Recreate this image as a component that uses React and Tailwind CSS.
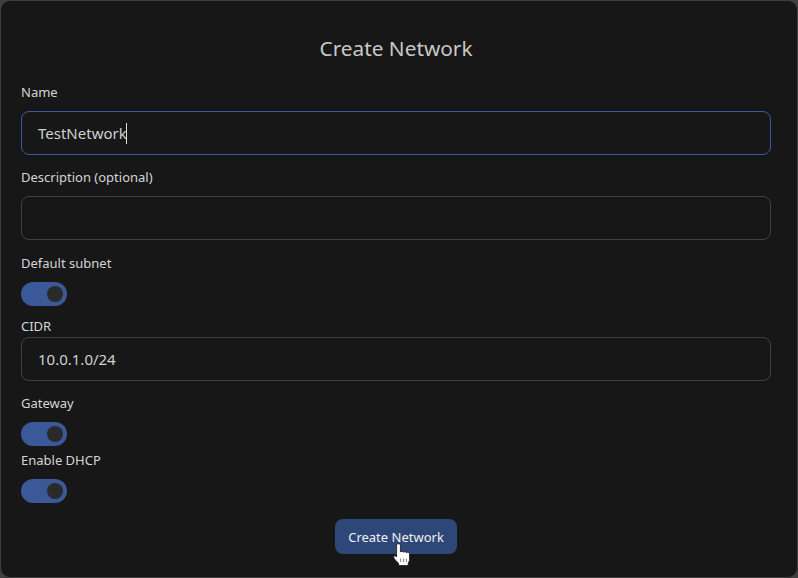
import React from "react";

function Label({ children, className = "" }) {
  return <div className={`h-[19px] text-[13px] leading-[19px] text-[#d5d5d5] ${className}`}>{children}</div>;
}

function Field({ value, focused, caret, className = "" }) {
  return (
    <div
      className={`flex h-[44px] w-full items-center rounded-[8px] border pl-[16px] text-[15px] text-[#d0d0d0] ${
        focused ? "border-[#3a5aa0]" : "border-[#414141]"
      } ${className}`}
    >
      <span>{value}</span>
      {caret && <span className="ml-[-1px] h-[21px] w-px bg-[#e0e0e0]" />}
    </div>
  );
}

function Toggle({ className = "" }) {
  return (
    <div className={`flex h-[24px] w-[46px] items-center justify-end rounded-full bg-[#3b5998] pr-[4px] ${className}`}>
      <div className="h-[16px] w-[16px] rounded-full bg-[#2a2a2a]" />
    </div>
  );
}

function HandCursor() {
  return (
    <svg className="absolute left-[58px] top-[24px]" width="18" height="24" viewBox="0 0 18 24">
      <path
        d="M3.6 2.2c0-2 3.8-2 3.8 0v6.9c.2-1 3-1 3.1.2.2-.9 2.9-.9 3 .4.3-.8 3-.6 3 .9v5.6c0 1.8-.7 2.9-1.3 3.8v2.6H5.6v-2.4C4.2 19 1.6 16.6.8 14.7c-.6-1.5 1-2.6 2.1-1.5l.7.8V2.2z"
        fill="#ffffff"
        stroke="#111111"
        strokeWidth="0.8"
        strokeLinejoin="round"
      />
      <path d="M7.6 15.5v3.5M10.5 15.5v3.5M13.4 15.5v3.5" stroke="#555555" strokeWidth="0.7" fill="none" />
    </svg>
  );
}

export default function App() {
  return (
    <div className="h-[578px] w-[798px] overflow-hidden bg-[#3f3f3f] font-['Noto_Sans','Open_Sans',sans-serif]">
      <div className="box-border h-[578px] w-[798px] rounded-[10px] border border-[#3f3f3f] bg-[#171717] pl-[20px] pr-[26px] pt-[32px]">
        <h1 className="h-[30px] text-center text-[20.8px] font-normal leading-[30px] text-[#c8c8c8]">Create Network</h1>
        <Label className="mt-[20px]">Name</Label>
        <Field className="mt-[9px]" value="TestNetwork" focused caret />
        <Label className="mt-[13px]">Description (optional)</Label>
        <Field className="mt-[9px]" value="" />
        <Label className="mt-[14px]">Default subnet</Label>
        <Toggle className="mt-[9px]" />
        <Label className="mt-[11px]">CIDR</Label>
        <Field className="mt-[1px]" value="10.0.1.0/24" />
        <Label className="mt-[13px]">Gateway</Label>
        <Toggle className="mt-[9px]" />
        <Label className="mt-[5px]">Enable DHCP</Label>
        <Toggle className="mt-[9px]" />
        <div className="mt-[16px] flex justify-center">
          <div className="relative flex h-[35px] w-[122px] items-center justify-center rounded-[8px] bg-[#2e4779] pt-[2px] text-[13px] text-[#f0f0f0]">
            Create Network
            <HandCursor />
          </div>
        </div>
      </div>
    </div>
  );
}
